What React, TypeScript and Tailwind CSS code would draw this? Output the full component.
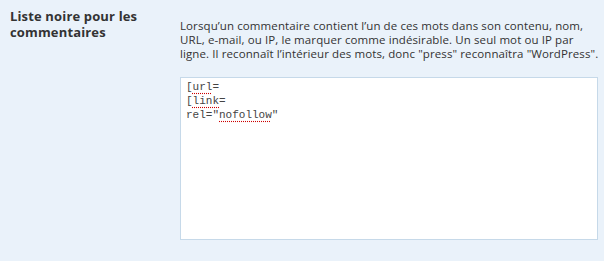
export default function App() {
  return (
    <div className="w-[604px] h-[261px] bg-[#eaf2fa] overflow-hidden">
      <div className="flex pt-[8px]">
        <div className="w-[180px] shrink-0 pl-[10px] pr-[10px]">
          <h3 className="font-['Open_Sans',sans-serif] font-bold text-[13px] leading-[16px] tracking-[0.15px] text-[#333]">
            Liste noire pour les commentaires
          </h3>
        </div>
        <div className="flex-1 pt-[11px]">
          <p className="whitespace-nowrap font-['Open_Sans',sans-serif] text-[11.5px] leading-[14px] tracking-[0.1px] text-[#333]">
            Lorsqu’un commentaire contient l’un de ces mots dans son contenu, nom,
            <br />
            URL, e-mail, ou IP, le marquer comme indésirable. Un seul mot ou IP par
            <br />
            ligne. Il reconnaît l’intérieur des mots, donc "press" reconnaîtra "WordPress".
          </p>
          <div className="mt-[16px] h-[163px] w-[418px] bg-white border border-[#c6d9e9] pl-[5px] pt-[2px] font-['Liberation_Mono',monospace] text-[11px] leading-[14px] text-[#444]">
            <div>[<span className="underline decoration-dotted decoration-[#c00] underline-offset-[3px]">url</span>=</div>
            <div>[<span className="underline decoration-dotted decoration-[#c00] underline-offset-[3px]">link</span>=</div>
            <div>rel="<span className="underline decoration-dotted decoration-[#c00] underline-offset-[3px]">nofollow</span>"</div>
          </div>
        </div>
      </div>
    </div>
  );
}
